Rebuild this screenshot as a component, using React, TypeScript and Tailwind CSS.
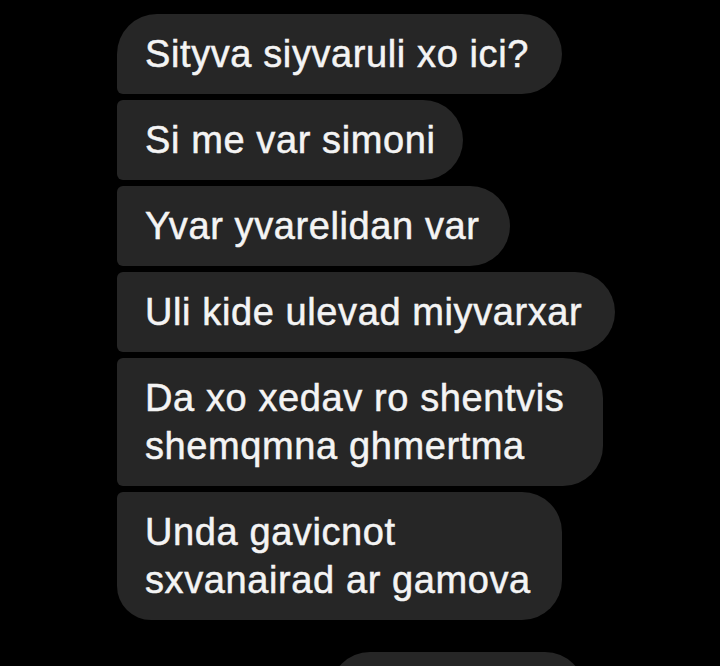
const messages = [
  { lines: ["Sityva siyvaruli xo ici?"], width: "w-[445px]", shape: "rounded-tl-[40px] rounded-bl-[6px] rounded-r-[40px]" },
  { lines: ["Si me var simoni"], width: "w-[346px]", shape: "rounded-l-[6px] rounded-r-[40px]" },
  { lines: ["Yvar yvarelidan var"], width: "w-[393px]", shape: "rounded-l-[6px] rounded-r-[40px]" },
  { lines: ["Uli kide ulevad miyvarxar"], width: "w-[498px]", shape: "rounded-l-[6px] rounded-r-[40px]" },
  { lines: ["Da xo xedav ro shentvis", "shemqmna ghmertma"], width: "w-[486px]", shape: "rounded-l-[6px] rounded-r-[40px]" },
  { lines: ["Unda gavicnot", "sxvanairad ar gamova"], width: "w-[445px]", shape: "rounded-tl-[6px] rounded-bl-[34px] rounded-r-[40px]" },
];

const Bubble = ({ lines, width, shape }: { lines: string[]; width: string; shape: string }) => (
  <div
    className={`${width} ${shape} bg-[#262626] pl-[28px] pt-[16px] pb-[16px] text-[38px] leading-[48px] tracking-[0.6px] text-[#f4f4f4] whitespace-nowrap [-webkit-text-stroke:0.5px_#f4f4f4]`}
  >
    {lines.map((line, i) => (
      <div key={i}>{line}</div>
    ))}
  </div>
);

export default function App() {
  return (
    <div
      className="w-full h-[666px] bg-black overflow-hidden flex flex-col items-start pl-[117px] pt-[14px]"
      style={{ fontFamily: '"Liberation Sans", Arial, sans-serif' }}
    >
      <div className="flex flex-col items-start gap-[6px]">
        {messages.map((m, i) => (
          <Bubble key={i} {...m} />
        ))}
      </div>
      {/* next group, cut off by the screen edge */}
      <div className="mt-[32px] ml-[213px] w-[255px] h-[80px] shrink-0 rounded-[40px] bg-[#262626]" />
    </div>
  );
}
